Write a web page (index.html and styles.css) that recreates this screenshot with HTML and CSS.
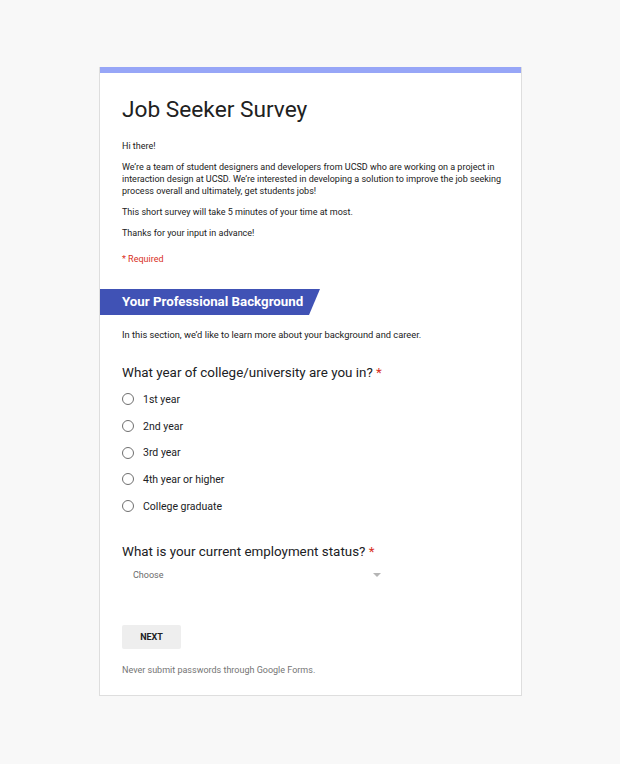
FILE: index.html
```html
<!DOCTYPE html>
<html>
<head>
<meta charset="utf-8">
<link rel="stylesheet" href="styles.css">
</head>
<body>
<div class="card">
  <div class="topbar"></div>
  <div class="header">
    <h1 class="title">Job Seeker Survey</h1>
    <p class="p first">Hi there!</p>
    <p class="p">We’re a team of student designers and developers from UCSD who are working on a project in interaction design at UCSD. We’re interested in developing a solution to improve the job seeking process overall and ultimately, get students jobs!</p>
    <p class="p">This short survey will take 5 minutes of your time at most.</p>
    <p class="p">Thanks for your input in advance!</p>
    <p class="required">* Required</p>
  </div>
  <div class="banner"><span class="banner-text">Your Professional Background</span></div>
  <p class="p section-desc">In this section, we’d like to learn more about your background and career.</p>
  <div class="question">
    <div class="q-title">What year of college/university are you in? <span class="star">*</span></div>
    <div class="options">
      <div class="opt"><span class="radio"></span><span class="opt-label">1st year</span></div>
      <div class="opt"><span class="radio"></span><span class="opt-label">2nd year</span></div>
      <div class="opt"><span class="radio"></span><span class="opt-label">3rd year</span></div>
      <div class="opt"><span class="radio"></span><span class="opt-label">4th year or higher</span></div>
      <div class="opt"><span class="radio"></span><span class="opt-label">College graduate</span></div>
    </div>
  </div>
  <div class="question q2">
    <div class="q-title">What is your current employment status? <span class="star">*</span></div>
    <div class="select"><span class="select-label">Choose</span><span class="arrow"></span></div>
  </div>
  <div class="footer">
    <button class="next">NEXT</button>
    <p class="note">Never submit passwords through Google Forms.</p>
  </div>
</div>
</body>
</html>
```

FILE: styles.css
```css
html, body {
  margin: 0;
  padding: 0;
}
body {
  background: #f8f8f8;
  font-family: Roboto, "Liberation Sans", Arial, sans-serif;
  color: #212121;
  padding-top: 67px;
}
.card {
  margin-left: 99px;
  width: 423px;
  background: #fff;
  border: 1px solid #dedede;
  border-top: none;
  height: 629px;
  box-sizing: border-box;
}
.topbar {
  height: 6px;
  background: #97a6f7;
}
.header {
  padding: 21px 15px 0 22px;
}
.title {
  margin: 0;
  font-size: 22.7px;
  line-height: 32px;
  font-weight: 400;
  color: #212121;
}
.p {
  margin: 9px 0 0 0;
  font-size: 9px;
  line-height: 12px;
  color: #212121;
}
.p.first {
  margin-top: 14px;
}
.required {
  margin: 14px 0 0 0;
  font-size: 9px;
  line-height: 12px;
  color: #d93025;
}
.banner {
  margin-top: 24px;
  height: 26px;
  width: 220px;
  background: #4052b5;
  clip-path: polygon(0 0, 100% 0, calc(100% - 11px) 100%, 0 100%);
  display: flex;
  align-items: center;
  padding-left: 22px;
  box-sizing: border-box;
}
.banner-text {
  color: #fff;
  font-weight: 700;
  font-size: 13.3px;
  line-height: 26px;
}
.section-desc {
  margin: 14px 22px 0 22px;
  font-size: 9.3px;
}
.question {
  padding: 0 22px;
  margin-top: 23px;
}
.q-title {
  font-size: 13.4px;
  line-height: 18px;
  color: #202124;
}
.star {
  color: #d93025;
}
.options {
  margin-top: 4px;
  display: flex;
  flex-direction: column;
}
.opt {
  display: flex;
  align-items: center;
  height: 26.7px;
}
.radio {
  width: 10px;
  height: 10px;
  border: 1.5px solid #6f6f6f;
  border-radius: 50%;
  margin-right: 9px;
}
.opt-label {
  font-size: 10.5px;
  color: #202124;
}
.q2 {
  margin-top: 24px;
}
.select {
  margin-top: 6px;
  width: 263px;
  display: flex;
  align-items: center;
  justify-content: space-between;
  padding: 0 4px 0 11px;
  box-sizing: border-box;
  height: 16px;
}
.select-label {
  font-size: 9px;
  color: #6b6b6b;
}
.arrow {
  width: 0;
  height: 0;
  border-left: 4px solid transparent;
  border-right: 4px solid transparent;
  border-top: 4px solid #b5b5b5;
}
.footer {
  padding: 0 22px;
  margin-top: 42px;
}
.next {
  display: block;
  width: 59px;
  height: 24px;
  border: none;
  border-radius: 2px;
  background: #eeeeee;
  font-family: Roboto, "Liberation Sans", Arial, sans-serif;
  font-weight: 700;
  font-size: 9px;
  color: #202124;
  padding: 0;
}
.note {
  margin: 15px 0 0 0;
  font-size: 9px;
  line-height: 12px;
  color: #757575;
}
```
